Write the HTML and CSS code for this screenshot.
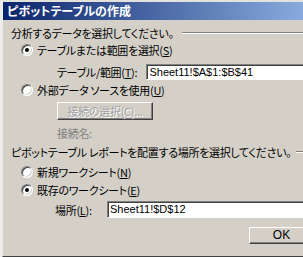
FILE: index.html
```html
<!DOCTYPE html>
<html lang="ja">
<head>
    <meta charset="UTF-8">
    <meta name="viewport" content="width=device-width, initial-scale=1.0">
    <title>ピボットテーブルの作成</title>

    <link rel="stylesheet" href="styles.css">
</head>
<body>
    <div class="window">
        <div class="titlebar">ピボットテーブルの作成</div>

        <div class="content">
            <div class="heading heading-first">
                <span>分析するデータを選択してください。</span>
                <span class="rule"></span>
            </div>

            <div class="radio-row row-s">
                <span class="radio checked"></span>
                <span>テーブルまたは範囲を選択(<u>S</u>)</span>
            </div>

            <div class="field-row row-t">
                <span class="field-label">テーブル/範囲(<u>T</u>):</span>
                <div class="textbox">Sheet11!$A$1:$B$41</div>
            </div>

            <div class="radio-row row-u">
                <span class="radio"></span>
                <span>外部データ ソースを使用(<u>U</u>)</span>
            </div>

            <div class="indent">
                <div class="button disabled">接続の選択(C)...</div>
                <div class="muted">接続名:</div>
            </div>

            <div class="heading heading-second">
                <span>ピボットテーブル レポートを配置する場所を選択してください。</span>
                <span class="rule"></span>
            </div>

            <div class="radio-row row-n">
                <span class="radio"></span>
                <span>新規ワークシート(<u>N</u>)</span>
            </div>

            <div class="radio-row row-e">
                <span class="radio checked"></span>
                <span>既存のワークシート(<u>E</u>)</span>
            </div>

            <div class="field-row row-l">
                <span class="field-label">場所(<u>L</u>):</span>
                <div class="textbox">Sheet11!$D$12</div>
            </div>

            <div class="actions">
                <div class="button ok">OK</div>
            </div>
        </div>
    </div>
</body>
</html>
```

FILE: styles.css
```css
body {
    margin: 0;
    overflow: hidden;
    font-family: "Noto Sans CJK JP", "Noto Sans", sans-serif;
    font-size: 11px;
    letter-spacing: -0.3px;
    font-feature-settings: "palt";
    color: black;
    background-color: #d4d0c8;
}

.window {
    width: 330px;
    height: 254px;
    border-top: 2px solid #e4e2dc;
    border-left: 3px solid #eeece8;
    border-bottom: 3px solid #404040;
    background-color: #d4d0c8;
    overflow: hidden;
}

.titlebar {
    height: 18px;
    line-height: 18px;
    padding-left: 4px;
    color: white;
    font-weight: bold;
    font-size: 12px;
    letter-spacing: 0;
    background: linear-gradient(to right, #0a246a 0px, #8cafe2 310px);
}

.content {
    padding-left: 8px;
}

.heading {
    display: flex;
    align-items: center;
    height: 16px;
    line-height: 16px;
    white-space: nowrap;
}

.heading-first {
    margin-top: 5px;
}

.heading-first .rule {
    margin-left: 8px;
}

.heading-second {
    margin-top: 3px;
}

.rule {
    flex: 1;
    height: 0;
    margin-left: 5px;
    border-top: 1px solid #808080;
    border-bottom: 1px solid white;
}

.radio-row {
    display: flex;
    align-items: center;
    height: 16px;
    margin-left: 10px;
    white-space: nowrap;
}

.row-s {
    margin-top: 1px;
}

.row-u {
    margin-top: 2px;
}

.row-n {
    margin-top: 4px;
}

.row-e {
    margin-top: 2px;
}

.radio {
    position: relative;
    width: 12px;
    height: 12px;
    margin-right: 4px;
    box-sizing: border-box;
    border-radius: 50%;
    border: 1px solid;
    border-color: #808080 white white #808080;
    box-shadow: inset 1px 1px 0 #404040, inset -1px -1px 0 #d4d0c8;
    background-color: white;
}

.radio.checked::after {
    content: "";
    position: absolute;
    left: 3px;
    top: 3px;
    width: 4px;
    height: 4px;
    border-radius: 50%;
    background-color: black;
}

.field-row {
    display: flex;
    align-items: center;
    white-space: nowrap;
}

.row-t {
    margin-top: 6px;
    padding-left: 46px;
}

.row-t .field-label {
    width: 96px;
}

.row-l {
    margin-top: 3px;
    padding-left: 44px;
}

.row-l .field-label {
    width: 52px;
}

.textbox {
    width: 200px;
    height: 16px;
    line-height: 14px;
    padding-left: 2px;
    box-sizing: border-box;
    border: 1px solid;
    border-color: #808080 white white #808080;
    box-shadow: inset 1px 1px 0 #404040;
    background-color: white;
    font-family: "Liberation Sans", Arial, sans-serif;
    font-size: 11px;
    letter-spacing: 0;
}

.row-l .textbox {
    height: 17px;
    line-height: 15px;
}

.indent {
    padding-left: 46px;
}

.button {
    box-sizing: border-box;
    border: 1px solid;
    border-color: white #404040 #404040 white;
    box-shadow: inset -1px -1px 0 #808080;
    text-align: center;
    white-space: nowrap;
}

.button.disabled {
    width: 96px;
    height: 18px;
    line-height: 16px;
    margin-top: 4px;
    color: #a0a0a0;
    text-shadow: 1px 1px 0 white;
}

.muted {
    height: 16px;
    line-height: 16px;
    margin-top: 5px;
    color: #808080;
}

.actions {
    display: flex;
    margin-top: 9px;
    padding-left: 238px;
}

.button.ok {
    width: 65px;
    height: 17px;
    line-height: 15px;
    font-family: "Liberation Sans", Arial, sans-serif;
    font-size: 12px;
    letter-spacing: 0;
}
```
